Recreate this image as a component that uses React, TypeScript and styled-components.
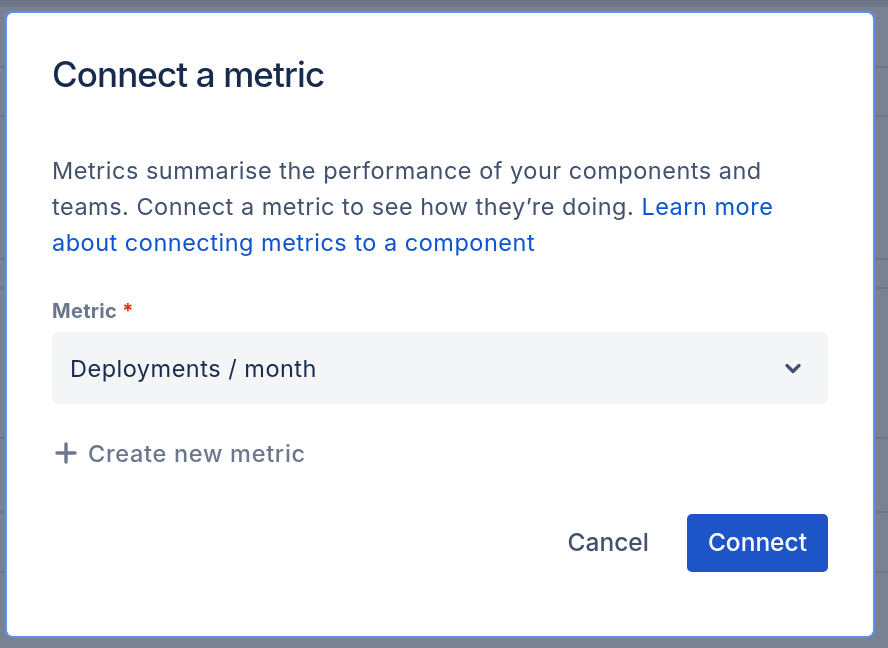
import React from "react";
import styled, { createGlobalStyle } from "styled-components";

const Global = createGlobalStyle`
  html, body { margin: 0; padding: 0; }
  body {
    background: #7a8193;
    font-family: Inter, "Noto Sans", "Liberation Sans", sans-serif;
    -webkit-font-smoothing: antialiased;
  }
  * { box-sizing: border-box; }
`;

const Page = styled.div`
  width: 888px;
  height: 648px;
  overflow: hidden;
  display: flex;
  flex-direction: column;
  background: #7a8193;
`;

const TopBand = styled.div`
  height: 7px;
  background: #6f7689;
  flex-shrink: 0;
`;

const BgRow = styled.div<{ $h: number }>`
  height: ${(p) => p.$h}px;
  flex-shrink: 0;
  border-bottom: 2px solid #6e7588;
`;

const Overlay = styled.div`
  position: fixed;
  left: 7px;
  top: 13px;
  width: 866px;
  height: 623px;
`;

const Modal = styled.section`
  width: 100%;
  height: 100%;
  background: #ffffff;
  border-radius: 6px;
  box-shadow: 0 0 0 2px #5a92f0;
  padding: 43px 45px 0 45px;
  display: flex;
  flex-direction: column;
`;

const Title = styled.h1`
  margin: 0;
  font-size: 35px;
  line-height: 36px;
  font-weight: 500;
  color: #172b4d;
  letter-spacing: -0.9px;
`;

const Body = styled.div`
  margin-top: 61px;
  display: flex;
  flex-direction: column;
`;

const Paragraph = styled.p`
  margin: 0;
  font-size: 23.5px;
  line-height: 36px;
  color: #42526e;
  letter-spacing: 0.5px;
  width: 740px;
`;

const Link = styled.a`
  color: #0c55d0;
  text-decoration: none;
`;

const Label = styled.label`
  margin-top: 40px;
  display: flex;
  align-items: center;
  gap: 5px;
  font-size: 20px;
  line-height: 20px;
  font-weight: 700;
  letter-spacing: 0.3px;
  color: #6b778c;
`;

const Required = styled.span`
  color: #de350b;
  font-size: 20px;
`;

const Select = styled.div`
  margin-top: 11px;
  height: 72px;
  border-radius: 5px;
  background: #f4f5f7;
  display: flex;
  align-items: center;
  justify-content: space-between;
  padding: 0 27px 0 18px;
  font-size: 23.5px;
  letter-spacing: 0.5px;
  color: #172b4d;
`;

const CreateLink = styled.button`
  margin-top: 31px;
  align-self: flex-start;
  border: 0;
  background: none;
  padding: 0 0 0 3px;
  height: 36px;
  display: flex;
  align-items: center;
  gap: 11px;
  font-family: inherit;
  font-size: 23.5px;
  font-weight: 500;
  letter-spacing: 0.7px;
  color: #6b778c;
`;

const Footer = styled.div`
  margin-top: 43px;
  display: flex;
  justify-content: flex-end;
  gap: 17px;
`;

const Button = styled.button<{ $primary?: boolean }>`
  height: 58px;
  border: 0;
  border-radius: 5px;
  padding: 0 21px 3px;
  font-family: inherit;
  font-size: 24.5px;
  font-weight: 500;
  background: ${(p) => (p.$primary ? "#1d55c8" : "transparent")};
  color: ${(p) => (p.$primary ? "#ffffff" : "#42526e")};
`;

const Chevron = () => (
  <svg width="16" height="11" viewBox="0 0 16 11" fill="none">
    <path d="M2 2.5 L8 8.5 L14 2.5" stroke="#42526e" strokeWidth="3.2" strokeLinecap="round" strokeLinejoin="round" />
  </svg>
);

const Plus = () => (
  <svg width="22" height="22" viewBox="0 0 22 22" fill="none">
    <path d="M11 2 V20 M2 11 H20" stroke="#6b778c" strokeWidth="3.4" strokeLinecap="round" />
  </svg>
);

export default function App() {
  return (
    <>
      <Global />
      <Page>
        <TopBand />
        <BgRow $h={61} />
        <BgRow $h={49} />
        <BgRow $h={143} />
        <BgRow $h={29} />
        <BgRow $h={150} />
        <BgRow $h={74} />
        <BgRow $h={60} />
      </Page>
      <Overlay>
        <Modal role="dialog" aria-label="Connect a metric">
          <Title>Connect a metric</Title>
          <Body>
            <Paragraph>
              Metrics summarise the performance of your components and teams. Connect a metric to see how they’re doing.{" "}
              <Link href="#">Learn more about connecting metrics to a component</Link>
            </Paragraph>
            <Label>
              Metric<Required>*</Required>
            </Label>
            <Select>
              <span>Deployments / month</span>
              <Chevron />
            </Select>
            <CreateLink>
              <Plus />
              Create new metric
            </CreateLink>
          </Body>
          <Footer>
            <Button>Cancel</Button>
            <Button $primary>Connect</Button>
          </Footer>
        </Modal>
      </Overlay>
    </>
  );
}
